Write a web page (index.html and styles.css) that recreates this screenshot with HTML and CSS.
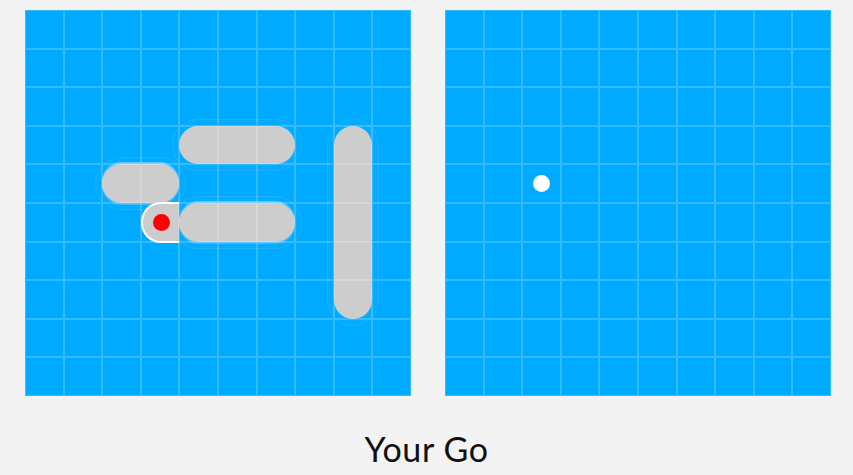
FILE: index.html
```html
<!DOCTYPE html>
<html>
<head>
<meta charset="utf-8">
<link rel="stylesheet" href="styles.css">
</head>
<body>
<div class="page">
  <div class="boards">
    <div class="board" id="mine">
      <div class="ship h" style="grid-area: 4 / 5 / 5 / 8"></div>
      <div class="ship h lit" style="grid-area: 5 / 3 / 6 / 5"></div>
      <div class="ship h lit" style="grid-area: 6 / 5 / 7 / 8"></div>
      <div class="ship v" style="grid-area: 4 / 9 / 9 / 10"></div>
      <div class="hitcap" style="grid-area: 6 / 4 / 7 / 5"><span class="dot red"></span></div>
    </div>
    <div class="board" id="theirs">
      <div class="mark" style="grid-area: 5 / 3 / 6 / 4"><span class="dot white"></span></div>
    </div>
  </div>
  <div class="status">Your Go</div>
</div>
<script>
document.querySelectorAll('.board').forEach(function(b){
  for (var r = 1; r <= 10; r++) for (var c = 1; c <= 10; c++) {
    var d = document.createElement('div');
    d.className = 'cell';
    d.style.gridArea = r + ' / ' + c;
    b.appendChild(d);
  }
});
</script>
</body>
</html>
```
FILE: styles.css
```css
html, body { margin: 0; padding: 0; }
body {
  background: #f3f3f3;
  width: 853px;
  height: 475px;
  overflow: hidden;
  font-family: "Lato", "Open Sans", sans-serif;
}
.page {
  display: flex;
  flex-direction: column;
  align-items: center;
  padding-top: 10px;
}
.boards {
  display: flex;
  gap: 34px;
  padding-left: 3px;
}
.board {
  width: 386px;
  height: 386px;
  background: #00aaff;
  display: grid;
  grid-template-columns: repeat(10, 1fr);
  grid-template-rows: repeat(10, 1fr);
  position: relative;
}
.cell {
  border: 1px solid rgba(255,255,255,0.2);
  z-index: 3;
  pointer-events: none;
}
.ship {
  background: #cccccc;
  border-radius: 20px;
  position: relative;
  z-index: 1;
}
.ship::before {
  content: "";
  position: absolute;
  inset: -7px;
  border: 1px solid rgba(255,255,255,0.08);
  border-radius: 26px;
  background: rgba(255,255,255,0.02);
}
.ship.lit {
  box-shadow: 0 -2px 0 rgba(255,255,255,0.35), 0 2px 0 rgba(255,255,255,0.2);
}
.hitcap {
  background: #cccccc;
  border: 2px solid #ffffff;
  border-right: none;
  border-radius: 20px 0 0 20px;
  margin: -1px 0;
  display: flex;
  align-items: center;
  justify-content: center;
  z-index: 2;
}
.mark {
  display: flex;
  align-items: center;
  justify-content: center;
  z-index: 4;
}
.dot {
  width: 17px;
  height: 17px;
  border-radius: 50%;
  display: block;
}
.dot.red { background: #ff0000; }
.dot.white { background: #ffffff; }
.status {
  margin-top: 33px;
  font-size: 34px;
  color: #111111;
  line-height: 40px;
  letter-spacing: 0.6px;
}
```
